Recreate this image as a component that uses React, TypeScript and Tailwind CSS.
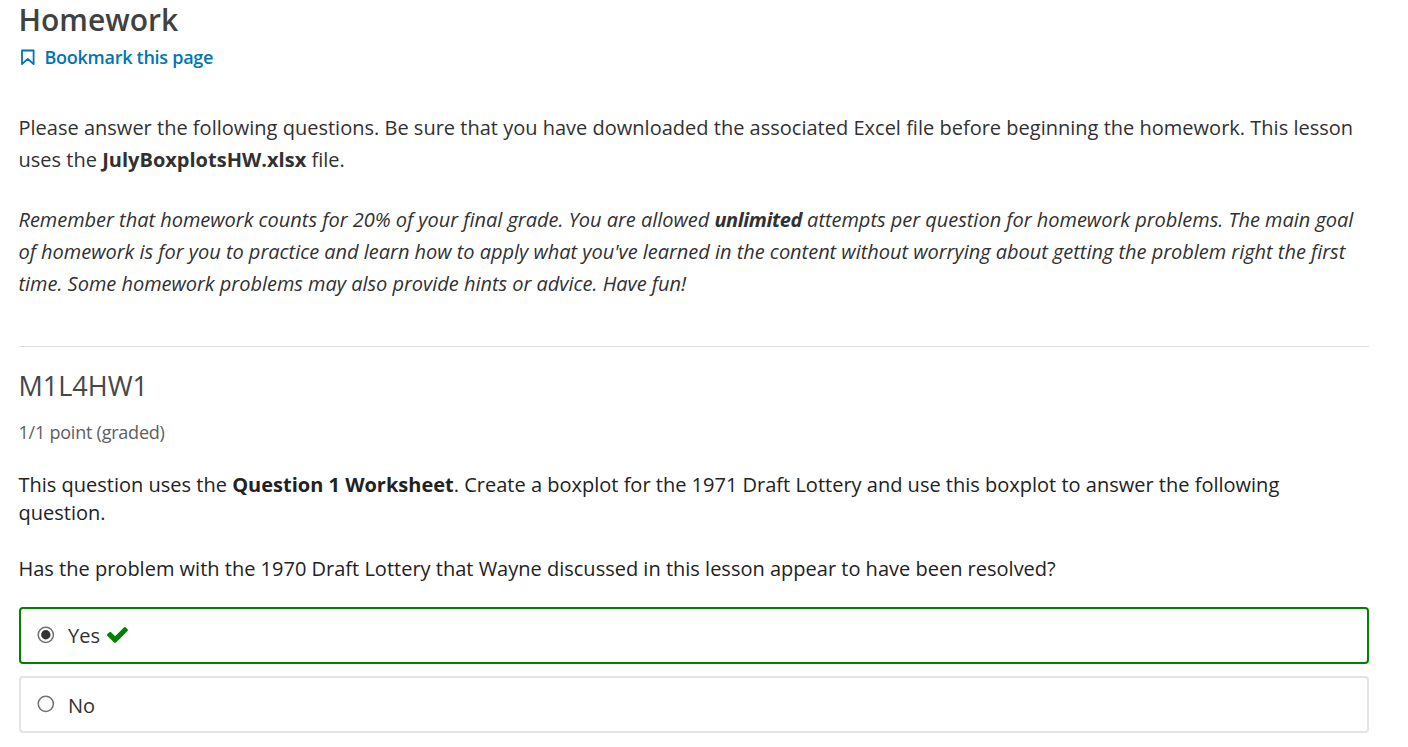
import React from "react";

function BookmarkIcon() {
  return (
    <svg width="15" height="17" viewBox="0 0 15 17" fill="none" stroke="#0075b4" strokeWidth="1.8" strokeLinejoin="round" className="ml-[1px] mr-[9.5px] shrink-0">
      <path d="M2 1.5H13.6V15.2L7.8 9.9L2 15.2Z" />
    </svg>
  );
}

function CheckIcon() {
  return (
    <svg width="21" height="16" viewBox="121 334 1550 1188" fill="#008100" className="ml-[7px] -mt-[1px]">
      <path d="M1671 566q0 40-28 68l-724 724-136 136q-28 28-68 28t-68-28l-136-136-362-362q-28-28-28-68t28-68l136-136q28-28 68-28t68 28l294 295 656-657q28-28 68-28t68 28l136 136q28 28 28 68z" />
    </svg>
  );
}

function Choice({ label, checked }: { label: string; checked?: boolean }) {
  return (
    <label className={`flex h-[57px] items-center rounded-[4px] border-2 pl-[16px] text-[#313131] ${checked ? "border-[#008100]" : "border-[#e4e4e4]"}`}>
      <svg width="18" height="18" viewBox="0 0 18 18" className="mr-[13px] -mt-[2px]">
        <circle cx="8.8" cy="8.8" r="7.6" fill="white" stroke="#707070" strokeWidth="1.5" />
        {checked && <circle cx="8.8" cy="8.8" r="4.7" fill="#333" />}
      </svg>
      <span className={checked ? "" : "pt-[2px]"}>{label}</span>
      {checked && <CheckIcon />}
    </label>
  );
}

export default function App() {
  return (
    <main className="h-[747px] w-[1408px] overflow-hidden bg-white pl-[19px] pr-[39px] font-['Open_Sans',sans-serif] text-[20px] text-[#313131]">
      <h1 className="-ml-[0.5px] h-[42px] text-[30px] leading-[40px] font-semibold text-[#414141]">Homework</h1>
      <a className="flex h-[30px] items-center text-[18px] font-semibold tracking-[-0.27px] text-[#0075b4]">
        <BookmarkIcon />Bookmark this page
      </a>
      <div className="-ml-[0.5px] mt-[40px] leading-[32px] whitespace-nowrap">
        <p className="tracking-[0.008px]">Please answer the following questions. Be sure that you have downloaded the associated Excel file before beginning the homework. This lesson<br />uses the <b>JulyBoxplotsHW.xlsx</b> file.</p>
        <p className="mt-[28px] tracking-[-0.025px] italic">Remember that homework counts for 20% of your final grade. You are allowed <b className="tracking-[-0.42px]">unlimited</b> attempts per question for homework problems. The main goal<br />of homework is for you to practice and learn how to apply what you've learned in the content without worrying about getting the problem right the first<br />time. Some homework problems may also provide hints or advice. Have fun!</p>
      </div>
      <section className="mt-[46px] border-t border-[#ddd] text-[#222]">
        <h2 className="-ml-[0.5px] mt-[19px] text-[27px] leading-[40px] text-[#474747]">M1L4HW1</h2>
        <div className="-ml-[0.5px] mt-[14px] text-[18px] leading-[24px] tracking-[-0.23px] text-[#5e5e5e]">1/1 point (graded)</div>
        <p className="-ml-[0.5px] mt-[27px] leading-[28px] tracking-[0.003px]">This question uses the <b>Question 1 Worksheet</b>. Create a boxplot for the 1971 Draft Lottery and use this boxplot to answer the following<br />question.</p>
        <p className="-ml-[0.5px] mt-[28px] leading-[28px] tracking-[0.003px]">Has the problem with the 1970 Draft Lottery that Wayne discussed in this lesson appear to have been resolved?</p>
        <div className="mt-[24px] flex flex-col gap-[12px]">
          <Choice label="Yes" checked />
          <Choice label="No" />
        </div>
      </section>
    </main>
  );
}
